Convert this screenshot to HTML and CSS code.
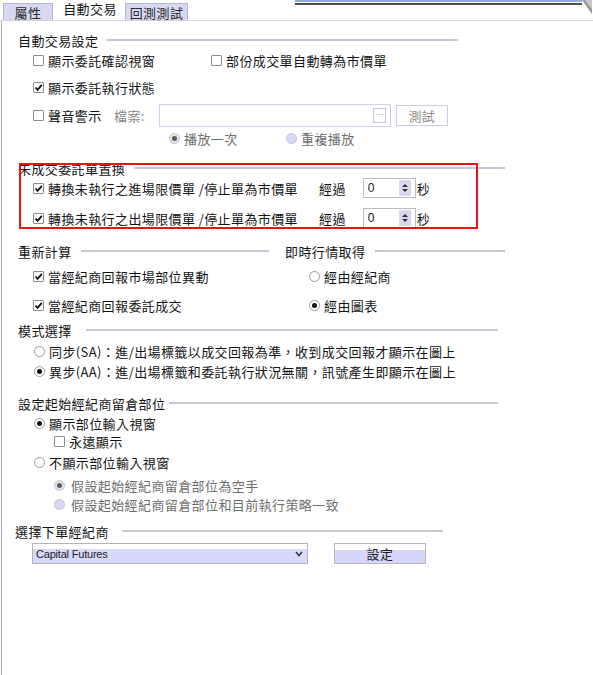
FILE: index.html
```html
<!DOCTYPE html>
<html lang="zh-Hant">
<head>
<meta charset="utf-8">
<title>自動交易</title>
<link rel="stylesheet" href="styles.css">
</head>
<body>
<div class="window">
  <div class="tabs">
    <div class="tab tab--off tab--first">屬性</div>
    <div class="tab tab--on">自動交易</div>
    <div class="tab tab--off tab--third">回測測試</div>
    <div class="tabfill">
      <div class="tabbar"></div>
      <svg class="tabcorner" width="10" height="14" viewBox="0 0 10 14"><polygon points="0,0 10,0 10,14" fill="#9a9a9a"/><polygon points="3,0 10,0 10,9" fill="#c8c8c8"/></svg>
    </div>
  </div>

  <div class="panel">
    <div class="gtitle gt-auto"><span>自動交易設定</span><i class="rule"></i></div>
    <div class="row r1 indent">
      <label class="item item--w178"><span class="cb"></span><span class="lbl">顯示委託確認視窗</span></label>
      <label class="item"><span class="cb"></span><span class="lbl">部份成交單自動轉為市價單</span></label>
    </div>
    <div class="row r2 indent">
      <label class="item"><span class="cb cb--on"><svg viewBox="0 0 9 9" width="9" height="9"><path d="M1.5 4.5 L3.6 6.8 L7.8 1.8" fill="none" stroke="#111" stroke-width="1.8"/></svg></span><span class="lbl">顯示委託執行狀態</span></label>
    </div>
    <div class="row r3 indent">
      <label class="item item--w81"><span class="cb"></span><span class="lbl">聲音警示</span></label>
      <span class="lbl lbl--dim file-lbl">檔案:</span>
      <div class="file-input"><span class="file-btn">…</span></div>
      <div class="btn-test">測試</div>
    </div>
    <div class="row r4">
      <label class="item item--w117"><span class="rb rb--dis-on"><i></i></span><span class="lbl lbl--dim2">播放一次</span></label>
      <label class="item"><span class="rb rb--dis"></span><span class="lbl lbl--dim2">重複播放</span></label>
    </div>

    <div class="convert">
      <div class="gtitle gt-convert"><span>未成交委託單置換</span><i class="rule"></i></div>
      <div class="row r5 indent">
        <label class="item item--w286"><span class="cb cb--on"><svg viewBox="0 0 9 9" width="9" height="9"><path d="M1.5 4.5 L3.6 6.8 L7.8 1.8" fill="none" stroke="#111" stroke-width="1.8"/></svg></span><span class="lbl">轉換未執行之進場限價單 /停止單為市價單</span></label>
        <span class="lbl after-lbl">經過</span>
        <div class="spin"><span class="spin-val">0</span><span class="spin-btns"><i class="up"></i><i class="down"></i></span></div>
        <span class="lbl sec">秒</span>
      </div>
      <div class="row r6 indent">
        <label class="item item--w286"><span class="cb cb--on"><svg viewBox="0 0 9 9" width="9" height="9"><path d="M1.5 4.5 L3.6 6.8 L7.8 1.8" fill="none" stroke="#111" stroke-width="1.8"/></svg></span><span class="lbl">轉換未執行之出場限價單 /停止單為市價單</span></label>
        <span class="lbl after-lbl">經過</span>
        <div class="spin"><span class="spin-val">0</span><span class="spin-btns"><i class="up"></i><i class="down"></i></span></div>
        <span class="lbl sec">秒</span>
      </div>
      <div class="highlight"></div>
    </div>

    <div class="twocol">
      <div class="col">
        <div class="gtitle gt-recalc"><span>重新計算</span><i class="rule"></i></div>
        <div class="row c1 indent">
          <label class="item"><span class="cb cb--on"><svg viewBox="0 0 9 9" width="9" height="9"><path d="M1.5 4.5 L3.6 6.8 L7.8 1.8" fill="none" stroke="#111" stroke-width="1.8"/></svg></span><span class="lbl">當經紀商回報市場部位異動</span></label>
        </div>
        <div class="row c2 indent">
          <label class="item"><span class="cb cb--on"><svg viewBox="0 0 9 9" width="9" height="9"><path d="M1.5 4.5 L3.6 6.8 L7.8 1.8" fill="none" stroke="#111" stroke-width="1.8"/></svg></span><span class="lbl">當經紀商回報委託成交</span></label>
        </div>
      </div>
      <div class="col">
        <div class="gtitle gt-quote"><span>即時行情取得</span><i class="rule"></i></div>
        <div class="row c1 indent-r">
          <label class="item"><span class="rb"></span><span class="lbl lbl--rb">經由經紀商</span></label>
        </div>
        <div class="row c2 indent-r">
          <label class="item"><span class="rb rb--on"><i></i></span><span class="lbl lbl--rb">經由圖表</span></label>
        </div>
      </div>
    </div>

    <div class="gtitle gt-mode"><span>模式選擇</span><i class="rule"></i></div>
    <div class="row m1 indent-m">
      <label class="item"><span class="rb"></span><span class="lbl">同步(SA)：進/出場標籤以成交回報為準，收到成交回報才顯示在圖上</span></label>
    </div>
    <div class="row m2 indent-m">
      <label class="item"><span class="rb rb--on"><i></i></span><span class="lbl">異步(AA)：進/出場標籤和委託執行狀況無關，訊號產生即顯示在圖上</span></label>
    </div>

    <div class="gtitle gt-pos"><span>設定起始經紀商留倉部位</span><i class="rule"></i></div>
    <div class="row p1 indent-m">
      <label class="item"><span class="rb rb--on"><i></i></span><span class="lbl">顯示部位輸入視窗</span></label>
    </div>
    <div class="row p2 indent-sub">
      <label class="item"><span class="cb"></span><span class="lbl">永遠顯示</span></label>
    </div>
    <div class="row p3 indent-m">
      <label class="item"><span class="rb"></span><span class="lbl lbl--tight">不顯示部位輸入視窗</span></label>
    </div>
    <div class="row p4 indent-sub">
      <label class="item"><span class="rb rb--dis-on"><i></i></span><span class="lbl lbl--dim2 lbl--rb2">假設起始經紀商留倉部位為空手</span></label>
    </div>
    <div class="row p5 indent-sub">
      <label class="item"><span class="rb rb--dis"></span><span class="lbl lbl--dim2 lbl--rb2">假設起始經紀商留倉部位和目前執行策略一致</span></label>
    </div>

    <div class="gtitle gt-broker"><span>選擇下單經紀商</span><i class="rule"></i></div>
    <div class="row s1">
      <div class="select"><span class="select-val">Capital Futures</span><svg class="chev" width="8" height="6" viewBox="0 0 8 6"><path d="M1 1 L4 4.5 L7 1" fill="none" stroke="#333" stroke-width="1.5"/></svg></div>
      <div class="btn-set">設定</div>
    </div>
  </div>
</div>
</body>
</html>
```

FILE: styles.css
```css
html, body {
  margin: 0;
  padding: 0;
  background: #ffffff;
}

.window {
  width: 593px;
  height: 675px;
  font-family: "Noto Sans CJK TC", "Noto Sans", sans-serif;
  font-size: 13px;
  letter-spacing: 0.4px;
  color: #141414;
  overflow: hidden;
}

/* ---------- tab strip ---------- */
.tabs {
  display: flex;
  align-items: flex-end;
  height: 20px;
  border-bottom: 1px solid #d2d2d2;
}

.tab {
  display: flex;
  align-items: center;
  justify-content: center;
  box-sizing: border-box;
  line-height: 1;
}

.tab--off {
  height: 17px;
  background: #d8d8f2;
  border: 1px solid #b6b6d4;
  border-bottom: none;
  color: #2a2a2a;
}

.tab--first {
  width: 50px;
  margin-left: 3px;
}

.tab--on {
  width: 70px;
  height: 20px;
  margin-left: 2px;
  background: #ffffff;
  padding-bottom: 3px;
}

.tab--third {
  width: 63px;
}

.tabfill {
  flex: 1;
  height: 20px;
  display: flex;
  align-items: flex-start;
  padding-left: 107px;
}

.tabbar {
  flex: 1;
  height: 1px;
  border-top: 2px solid #8eaedd;
  border-bottom: 2px solid #4e4e55;
}

.tabcorner {
  display: block;
  margin-right: 1px;
}

/* ---------- panel ---------- */
.panel {
  margin-left: 1px;
  height: 654px;
  border-left: 1px solid #a8a8a8;
  padding-left: 16px;
  padding-top: 9px;
  box-sizing: border-box;
}

.gtitle {
  display: flex;
  align-items: center;
  height: 20px;
  white-space: nowrap;
}

.gtitle .rule {
  flex: 1;
  height: 2px;
  background: #c8c8da;
  margin-left: 9px;
}

.gt-auto { width: 440px; }
.gt-convert { width: 487px; margin-top: 10px; }
.gt-recalc { width: 251px; }
.gt-quote { width: 220px; }
.gt-quote .rule { margin-left: 10px; }
.gt-mode { width: 480px; margin-top: 5px; }
.gt-mode .rule { margin-left: 14px; }
.gt-pos { width: 480px; margin-top: 12px; }
.gt-pos .rule { margin-left: 4px; }
.gt-broker { width: 428px; margin-top: 8px; margin-left: -3px; }
.gt-broker .rule { margin-left: 13px; }

.row {
  display: flex;
  align-items: center;
  height: 20px;
  white-space: nowrap;
}

.indent { padding-left: 15px; }
.indent-m { padding-left: 16px; }
.indent-r { padding-left: 24px; }
.indent-sub { padding-left: 36px; }

.r2 { margin-top: 7px; }
.r3 { margin-top: 7px; height: 23px; }
.r4 { margin-top: 1px; padding-left: 151px; }
.r6 { margin-top: 10px; }

.item {
  display: flex;
  align-items: center;
}

.item--w178 { width: 178px; }
.item--w81 { width: 81px; }
.item--w117 { width: 117px; }
.item--w286 { width: 286px; }

.lbl {
  line-height: 1;
  margin-left: 4px;
}

.lbl--rb { margin-left: 4px; }
.lbl--rb2 { margin-left: 6px; }
.lbl--dim { color: #8a8a8a; }
.lbl--dim2 { color: #6e6e6e; }
.lbl--tight { margin-left: 4px; }

/* checkbox */
.cb {
  width: 11px;
  height: 11px;
  box-sizing: border-box;
  border: 1px solid #8c8c8c;
  border-radius: 1px;
  background: #ffffff;
  display: flex;
  align-items: center;
  justify-content: center;
  flex: none;
}

.cb svg { display: block; }

/* radio */
.rb {
  width: 11px;
  height: 11px;
  box-sizing: border-box;
  border: 1px solid #9a9a9a;
  border-radius: 50%;
  background: #ffffff;
  display: flex;
  align-items: center;
  justify-content: center;
  flex: none;
}

.rb i {
  width: 5px;
  height: 5px;
  border-radius: 50%;
  background: #111111;
}

.rb--dis {
  background: #d9d9f5;
  border-color: #c0c0dc;
}

.rb--dis-on {
  background: #e2e2f0;
  border-color: #c4c4d8;
}

.rb--dis-on i {
  background: #5e5e50;
}

/* file input */
.file-lbl {
  margin-left: 0;
}

.file-input {
  margin-left: 14px;
  width: 232px;
  height: 23px;
  box-sizing: border-box;
  border: 1px solid #cfcff2;
  display: flex;
  align-items: center;
  justify-content: flex-end;
  padding-right: 4px;
}

.file-btn {
  width: 13px;
  height: 15px;
  box-sizing: border-box;
  border: 1px solid #c4c4de;
  font-size: 9px;
  letter-spacing: 0;
  line-height: 12px;
  color: #999999;
  text-align: center;
}

.btn-test {
  margin-left: 5px;
  width: 52px;
  height: 21px;
  box-sizing: border-box;
  border: 1px solid #cacaea;
  display: flex;
  align-items: center;
  justify-content: center;
  color: #8a8a8a;
  line-height: 1;
}

/* convert section with annotation */
.convert {
  position: relative;
}

.highlight {
  position: absolute;
  left: 1px;
  top: 5px;
  width: 459px;
  height: 66px;
  box-sizing: border-box;
  border: 2px solid #ee1111;
}

.after-lbl {
  margin-left: 0;
}

.spin {
  margin-left: 17px;
  width: 53px;
  height: 20px;
  box-sizing: border-box;
  border: 1px solid #bcbcbc;
  display: flex;
  align-items: stretch;
}

.spin-val {
  flex: 1;
  padding-left: 4px;
  font-family: "Liberation Sans", sans-serif;
  font-size: 12px;
  line-height: 18px;
  letter-spacing: 0;
}

.spin-btns {
  width: 12px;
  margin: 1px 4px 1px 0;
  background: #d8d8f0;
  display: flex;
  flex-direction: column;
  align-items: center;
  justify-content: center;
  gap: 2px;
}

.spin-btns .up {
  width: 0;
  height: 0;
  border-left: 3px solid transparent;
  border-right: 3px solid transparent;
  border-bottom: 3px solid #333333;
}

.spin-btns .down {
  width: 0;
  height: 0;
  border-left: 3px solid transparent;
  border-right: 3px solid transparent;
  border-top: 3px solid #333333;
}

.sec {
  margin-left: 1px;
}

/* two columns */
.twocol {
  display: grid;
  grid-template-columns: 267px 221px;
  margin-top: 13px;
}

.c1 { margin-top: 5px; }
.c2 { margin-top: 9px; }

.m1 { margin-top: 1px; }

.p1, .p2, .p3, .p4, .p5 { height: 18px; }
.p1 { margin-top: 1px; }
.p3 { margin-top: 3px; }
.p4 { margin-top: 5px; }
.p5 { margin-top: 1px; }

/* broker select */
.s1 {
  margin-top: 2px;
  height: 21px;
  padding-left: 14px;
  align-items: stretch;
}

.select {
  width: 276px;
  box-sizing: border-box;
  border: 1px solid #b4b4b4;
  background: linear-gradient(#ffffff 0, #ffffff 5px, #d8d8fa 5px, #d8d8fa 100%);
  display: flex;
  align-items: center;
  padding: 0 4px 0 3px;
}

.select-val {
  flex: 1;
  font-family: "Liberation Sans", sans-serif;
  font-size: 11px;
  letter-spacing: -0.2px;
  color: #222222;
  padding-top: 1px;
}

.chev { display: block; }

.btn-set {
  margin-left: 26px;
  width: 92px;
  box-sizing: border-box;
  border: 1px solid #b8b8b8;
  background: linear-gradient(#ffffff 0, #ffffff 6px, #d6d6f8 6px, #d6d6f8 100%);
  display: flex;
  align-items: center;
  justify-content: center;
  line-height: 1;
  color: #1e1e1e;
}
```
